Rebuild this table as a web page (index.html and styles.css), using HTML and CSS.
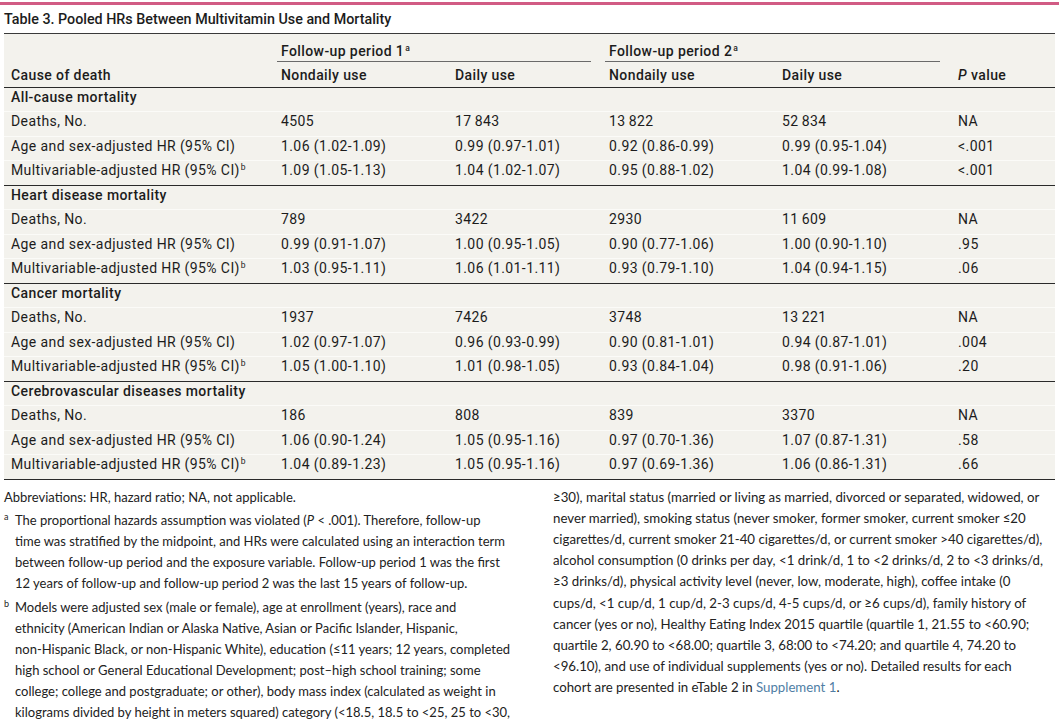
FILE: index.html
```html
<!DOCTYPE html>
<html lang="en">
<head>
<meta charset="utf-8">
<title>Table 3</title>
<link rel="stylesheet" href="styles.css">
</head>
<body>
<div class="page">
  <div class="topbar"></div>
  <h1 class="title">Table 3. Pooled HRs Between Multivitamin Use and Mortality</h1>
  <table class="data">
    <colgroup>
      <col class="c1"><col class="c2"><col class="c3"><col class="c4"><col class="c5"><col class="c6">
    </colgroup>
    <thead>
      <tr class="h1">
        <th></th>
        <th colspan="2" class="span"><span class="grp">Follow-up period 1<sup>a</sup></span></th>
        <th colspan="2" class="span"><span class="grp">Follow-up period 2<sup>a</sup></span></th>
        <th></th>
      </tr>
      <tr class="h2">
        <th>Cause of death</th>
        <th>Nondaily use</th>
        <th>Daily use</th>
        <th>Nondaily use</th>
        <th>Daily use</th>
        <th><i>P</i> value</th>
      </tr>
    </thead>
    <tbody>
      <tr class="sec"><td colspan="6">All-cause mortality</td></tr>
      <tr><td>Deaths, No.</td><td>4505</td><td>17&#8201;843</td><td>13&#8201;822</td><td>52&#8201;834</td><td>NA</td></tr>
      <tr><td>Age and sex-adjusted HR (95% CI)</td><td>1.06 (1.02-1.09)</td><td>0.99 (0.97-1.01)</td><td>0.92 (0.86-0.99)</td><td>0.99 (0.95-1.04)</td><td>&lt;.001</td></tr>
      <tr class="last"><td>Multivariable-adjusted HR (95% CI)<sup>b</sup></td><td>1.09 (1.05-1.13)</td><td>1.04 (1.02-1.07)</td><td>0.95 (0.88-1.02)</td><td>1.04 (0.99-1.08)</td><td>&lt;.001</td></tr>

      <tr class="sec"><td colspan="6">Heart disease mortality</td></tr>
      <tr><td>Deaths, No.</td><td>789</td><td>3422</td><td>2930</td><td>11&#8201;609</td><td>NA</td></tr>
      <tr><td>Age and sex-adjusted HR (95% CI)</td><td>0.99 (0.91-1.07)</td><td>1.00 (0.95-1.05)</td><td>0.90 (0.77-1.06)</td><td>1.00 (0.90-1.10)</td><td>.95</td></tr>
      <tr class="last"><td>Multivariable-adjusted HR (95% CI)<sup>b</sup></td><td>1.03 (0.95-1.11)</td><td>1.06 (1.01-1.11)</td><td>0.93 (0.79-1.10)</td><td>1.04 (0.94-1.15)</td><td>.06</td></tr>

      <tr class="sec"><td colspan="6">Cancer mortality</td></tr>
      <tr><td>Deaths, No.</td><td>1937</td><td>7426</td><td>3748</td><td>13&#8201;221</td><td>NA</td></tr>
      <tr><td>Age and sex-adjusted HR (95% CI)</td><td>1.02 (0.97-1.07)</td><td>0.96 (0.93-0.99)</td><td>0.90 (0.81-1.01)</td><td>0.94 (0.87-1.01)</td><td>.004</td></tr>
      <tr class="last"><td>Multivariable-adjusted HR (95% CI)<sup>b</sup></td><td>1.05 (1.00-1.10)</td><td>1.01 (0.98-1.05)</td><td>0.93 (0.84-1.04)</td><td>0.98 (0.91-1.06)</td><td>.20</td></tr>

      <tr class="sec"><td colspan="6">Cerebrovascular diseases mortality</td></tr>
      <tr><td>Deaths, No.</td><td>186</td><td>808</td><td>839</td><td>3370</td><td>NA</td></tr>
      <tr><td>Age and sex-adjusted HR (95% CI)</td><td>1.06 (0.90-1.24)</td><td>1.05 (0.95-1.16)</td><td>0.97 (0.70-1.36)</td><td>1.07 (0.87-1.31)</td><td>.58</td></tr>
      <tr class="last"><td>Multivariable-adjusted HR (95% CI)<sup>b</sup></td><td>1.04 (0.89-1.23)</td><td>1.05 (0.95-1.16)</td><td>0.97 (0.69-1.36)</td><td>1.06 (0.86-1.31)</td><td>.66</td></tr>
    </tbody>
  </table>

  <div class="notes">
    <div class="col left">
      <p class="abbr">Abbreviations: HR, hazard ratio; NA, not applicable.</p>
      <div class="fn">
        <span class="mark">a</span>
        <p>The proportional hazards assumption was violated (<i>P</i> &lt; .001). Therefore, follow-up<br>time was stratified by the midpoint, and HRs were calculated using an interaction term<br>between follow-up period and the exposure variable. Follow-up period 1 was the first<br>12 years of follow-up and follow-up period 2 was the last 15 years of follow-up.</p>
      </div>
      <div class="fn">
        <span class="mark">b</span>
        <p>Models were adjusted sex (male or female), age at enrollment (years), race and<br>ethnicity (American Indian or Alaska Native, Asian or Pacific Islander, Hispanic,<br>non-Hispanic Black, or non-Hispanic White), education (≤11 years; 12 years, completed<br>high school or General Educational Development; post–high school training; some<br>college; college and postgraduate; or other), body mass index (calculated as weight in<br>kilograms divided by height in meters squared) category (&lt;18.5, 18.5 to &lt;25, 25 to &lt;30,</p>
      </div>
    </div>
    <div class="col right">
      <p>≥30), marital status (married or living as married, divorced or separated, widowed, or<br>never married), smoking status (never smoker, former smoker, current smoker ≤20<br>cigarettes/d, current smoker 21-40 cigarettes/d, or current smoker &gt;40 cigarettes/d),<br>alcohol consumption (0 drinks per day, &lt;1 drink/d, 1 to &lt;2 drinks/d, 2 to &lt;3 drinks/d,<br>≥3 drinks/d), physical activity level (never, low, moderate, high), coffee intake (0<br>cups/d, &lt;1 cup/d, 1 cup/d, 2-3 cups/d, 4-5 cups/d, or ≥6 cups/d), family history of<br>cancer (yes or no), Healthy Eating Index 2015 quartile (quartile 1, 21.55 to &lt;60.90;<br>quartile 2, 60.90 to &lt;68.00; quartile 3, 68:00 to &lt;74.20; and quartile 4, 74.20 to<br>&lt;96.10), and use of individual supplements (yes or no). Detailed results for each<br>cohort are presented in eTable 2 in <a href="#" class="link">Supplement 1</a>.</p>
    </div>
  </div>
</div>
</body>
</html>
```

FILE: styles.css
```css
html, body {
  margin: 0;
  padding: 0;
  background: #ffffff;
}
.page {
  width: 1059px;
  height: 720px;
  overflow: hidden;
  color: #1c1c1c;
  font-family: "Roboto", "Liberation Sans", sans-serif;
}
.topbar {
  height: 3px;
  margin-top: 2px;
  background: #d15b84;
}
.title {
  margin: 0 4px;
  padding: 4px 0 0;
  height: 29px;
  font-family: "Roboto", "Liberation Sans", sans-serif;
  font-weight: 500;
  font-size: 14.3px;
  line-height: 20px;
  border-bottom: 1.5px solid #3a3a3a;
  box-sizing: border-box;
}
.data {
  width: 1051px;
  margin-left: 4px;
  border-collapse: collapse;
  background: #f3f2ed;
  font-size: 14px;
  letter-spacing: 0.4px;
  table-layout: fixed;
}
.c1 { width: 271px; }
.c2 { width: 174px; }
.c3 { width: 154px; }
.c4 { width: 173px; }
.c5 { width: 176px; }
.c6 { width: 103px; }
.data th, .data td {
  text-align: left;
  padding: 0 0 0 6px;
  white-space: nowrap;
  box-sizing: border-box;
}
.data th:first-child, .data td:first-child {
  padding-left: 7px;
}
.data th {
  font-weight: 500;
}
.h1 th {
  height: 28px;
  vertical-align: bottom;
}
.h1 th.span {
  padding-left: 2px;
  padding-right: 12px;
}
.grp {
  display: block;
  padding: 0 0 2px 4px;
  border-bottom: 1.5px solid #6a6a6a;
}
.h2 th {
  height: 25px;
  padding-bottom: 4px;
  vertical-align: bottom;
  border-bottom: 1.5px solid #2a2a2a;
}
.data td {
  height: 24.5px;
  padding-bottom: 5px;
  vertical-align: middle;
  border-bottom: 1px solid #fbfbf8;
}
.sec td {
  font-weight: 500;
}
.last td {
  border-bottom: 1.5px solid #2a2a2a;
}
sup {
  font-size: 8.5px;
  line-height: 0;
  vertical-align: 5px;
  margin-left: 1px;
  letter-spacing: 0;
}
.notes {
  display: grid;
  grid-template-columns: 549px 1fr;
  padding: 7px 4px 0;
  font-family: "Lato", "Open Sans", sans-serif;
  font-size: 13px;
  line-height: 21.2px;
  color: #222;
}
.notes p {
  margin: 0;
  white-space: nowrap;
}
.left {
  line-height: 20.9px;
}
.right {
  font-size: 13.25px;
}
.abbr {
  margin-bottom: 3px !important;
}
.fn {
  display: flex;
  margin-bottom: 3px;
}
.mark {
  width: 11px;
  flex: none;
  font-size: 9px;
  line-height: 14px;
}
.link {
  color: #4f7ea5;
  text-decoration: none;
}
```
